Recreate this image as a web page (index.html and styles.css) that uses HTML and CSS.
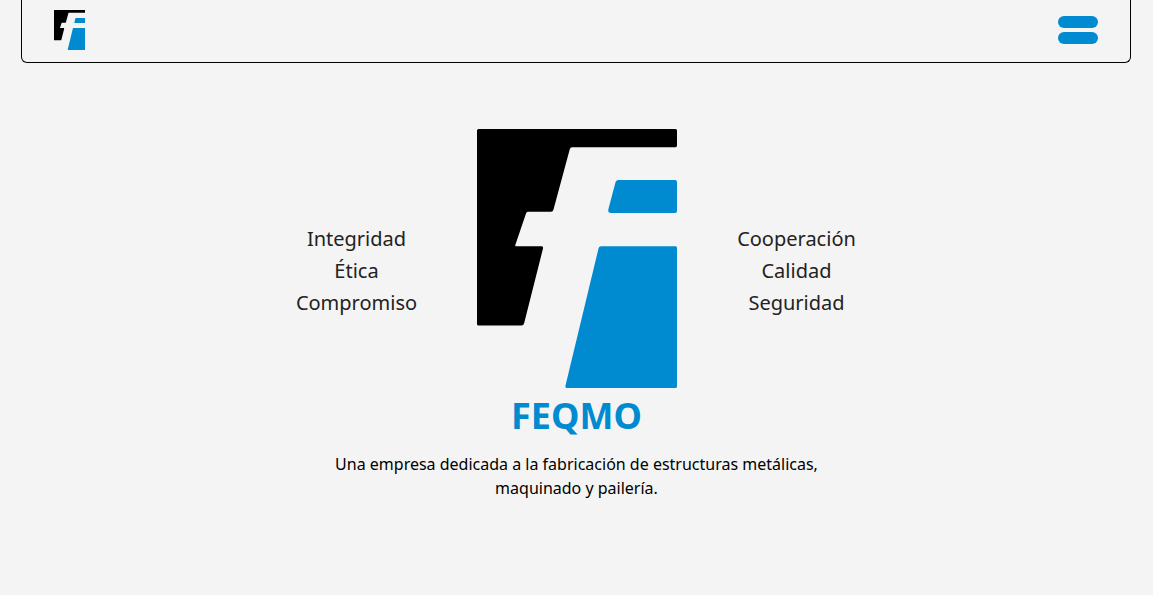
FILE: index.html
```html
<!DOCTYPE html>
<html lang="es">
<head>
<meta charset="utf-8">
<meta name="viewport" content="width=device-width, initial-scale=1">
<title>FEQMO</title>
<link rel="stylesheet" href="styles.css">
</head>
<body>
<svg class="sprite" aria-hidden="true">
  <symbol id="logo" viewBox="0 0 200 259" preserveAspectRatio="none">
    <path fill="#000" d="M1.500 0H198.500Q200 0 200 1.500V16.500Q200 18.300 198.500 18.300H95Q93.300 18.300 92.700 20.500L76.500 80.500Q76 82.800 74 82.800H51Q49.500 82.800 49 84.500L38.300 116Q38 117.300 39 117.300H64.500Q66.500 117.300 66 119.500L47.200 194Q46.500 196.500 44.500 196.500H1.500Q0 196.500 0 195V1.500Q0 0 1.500 0Z"/>
    <path fill="#008ad0" d="M141.500 51H198Q200 51 200 53V82Q200 84 198 84H134Q130.800 84 131.300 80.500L138.300 54Q139 51 141.500 51Z"/>
    <path fill="#008ad0" d="M124 117.300H198.500Q200 117.300 200 118.800V257.500Q200 259 198.500 259H90Q88 259 88.500 256.500L121.500 119.500Q122 117.300 124 117.300Z"/>
  </symbol>
</svg>
<header class="header">
  <a class="brand" href="#" aria-label="FEQMO">
    <svg class="brand-logo" aria-hidden="true"><use href="#logo"/></svg>
  </a>
  <button class="menu" type="button" aria-label="Abrir menú">
    <span class="menu-bar"></span>
    <span class="menu-bar"></span>
  </button>
</header>
<main class="hero">
  <div class="showcase">
    <ul class="values">
      <li>Integridad</li>
      <li>Ética</li>
      <li>Compromiso</li>
    </ul>
    <svg class="hero-logo" role="img" aria-label="Logotipo de FEQMO"><use href="#logo"/></svg>
    <ul class="values">
      <li>Cooperación</li>
      <li>Calidad</li>
      <li>Seguridad</li>
    </ul>
  </div>
  <h1 class="title">FEQMO</h1>
  <p class="tagline">Una empresa dedicada a la fabricación de estructuras metálicas, maquinado y pailería.</p>
</main>
</body>
</html>
```

FILE: styles.css
```css
* {
  box-sizing: border-box;
}

body {
  margin: 0;
  background: #f4f4f4;
  color: #000;
  font: 16px/24px "Noto Sans", sans-serif;
}

.sprite {
  position: absolute;
  width: 0;
  height: 0;
}

.header {
  display: flex;
  align-items: center;
  justify-content: space-between;
  margin: 0 22px 0 21px;
  padding: 10px 32px 12px;
  border: 1px solid #000;
  border-top: 0;
  border-radius: 0 0 6px 6px;
}

.brand,
.brand-logo {
  display: block;
}

.brand-logo {
  width: 31px;
  height: 40px;
}

.menu {
  display: flex;
  flex-direction: column;
  gap: 4px;
  padding: 0;
  border: 0;
  background: none;
  cursor: pointer;
}

.menu-bar {
  width: 40px;
  height: 12px;
  border-radius: 6px;
  background: #008ad0;
}

.hero {
  padding: 66px 16px;
  text-align: center;
}

.showcase {
  display: grid;
  grid-template-columns: 120px 200px 120px;
  justify-content: center;
  justify-items: center;
  align-items: center;
  gap: 60px;
}

.hero-logo {
  display: block;
  width: 200px;
  height: 259px;
}

.values {
  margin: 0;
  padding: 24px 0 0;
  list-style: none;
  color: #222;
  font-size: 20px;
  line-height: 32px;
}

.title {
  margin: 8px 0 16px;
  color: #008ad0;
  font-size: 36px;
  font-weight: 700;
  line-height: 40px;
}

.tagline {
  max-width: 512px;
  margin: 0 auto;
}
```
